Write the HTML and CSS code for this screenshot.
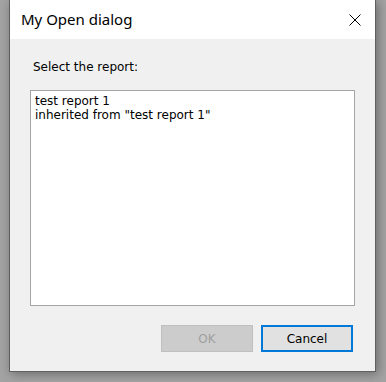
FILE: index.html
```html
<!DOCTYPE html>
<html lang="en">
<head>
    <meta charset="UTF-8">
    <title>My Open dialog</title>
    <link rel="stylesheet" href="styles.css">
</head>
<body>
    <div class="dialog">
        <div class="titlebar">
            <span class="title">My Open dialog</span>
            <svg class="close" width="12" height="12" viewBox="0 0 12 12">
                <path d="M0.5 0.5 L11.5 11.5 M11.5 0.5 L0.5 11.5" stroke="#000" stroke-width="1"/>
            </svg>
        </div>
        <div class="content">
            <label class="prompt">Select the report:</label>
            <div class="report-list">
                <div class="item">test report 1</div>
                <div class="item">inherited from "test report 1"</div>
            </div>
            <div class="buttons">
                <button class="btn" disabled>OK</button>
                <button class="btn btn-default">Cancel</button>
            </div>
        </div>
    </div>
</body>
</html>
```

FILE: styles.css
```css
body {
    margin: 0;
    width: 386px;
    height: 382px;
    background-color: #a3a3a3;
    font-family: 'DejaVu Sans', Tahoma, sans-serif;
    overflow: hidden;
}
.dialog {
    margin-left: 9px;
    width: 365px;
    height: 371px;
    border: 1px solid #5f5f5f;
    border-top: none;
    background-color: #f0f0f0;
    box-shadow: 2px 2px 10px rgba(0, 0, 0, 0.35);
    display: flex;
    flex-direction: column;
}
.titlebar {
    height: 39px;
    background-color: #fff;
    display: flex;
    align-items: center;
    justify-content: space-between;
    padding: 0 14px 0 11px;
}
.title {
    font-family: 'Noto Sans', sans-serif;
    font-size: 15px;
    color: #000;
    margin-top: -1px;
}
.close {
    display: block;
}
.content {
    flex: 1;
    padding: 21px 20px 0 20px;
    display: flex;
    flex-direction: column;
}
.prompt {
    font-size: 12px;
    line-height: 14px;
    color: #000;
    height: 30px;
    padding-left: 3px;
}
.report-list {
    width: 315px;
    height: 208px;
    background-color: #fff;
    border: 1px solid #a5a5a5;
    padding: 3px 4px;
    font-size: 12px;
    line-height: 14px;
    color: #000;
}
.buttons {
    display: flex;
    gap: 8px;
    margin-top: 19px;
    padding-left: 131px;
}
.btn {
    width: 92px;
    height: 27px;
    font-family: 'DejaVu Sans', Tahoma, sans-serif;
    font-size: 12px;
    background-color: #e1e1e1;
    border: 1px solid #adadad;
    color: #000;
    padding: 0;
}
.btn:disabled {
    background-color: #cccccc;
    border-color: #bfbfbf;
    color: #a0a0a0;
}
.btn-default {
    border: 2px solid #0078d7;
}
```
